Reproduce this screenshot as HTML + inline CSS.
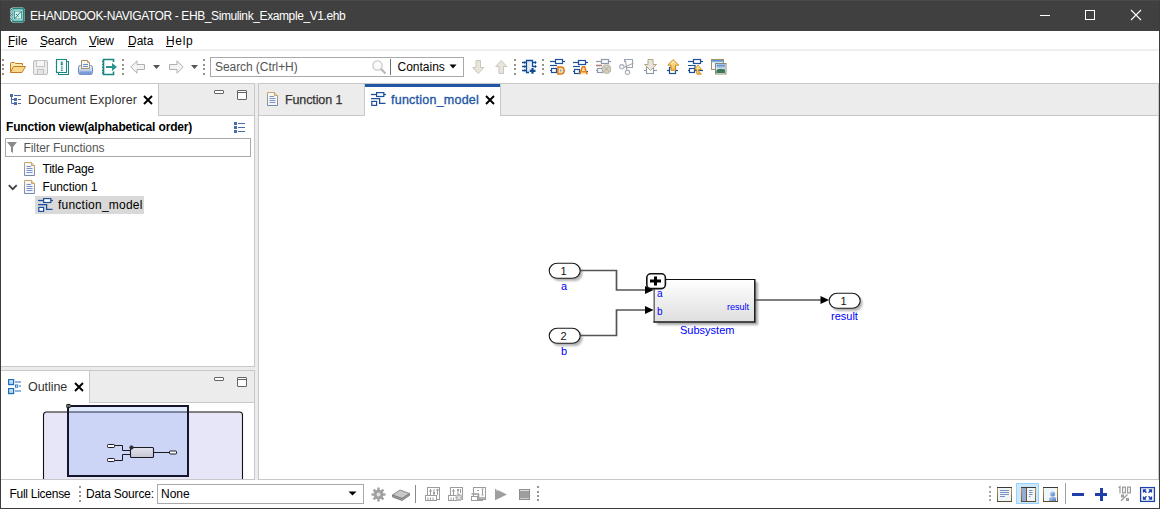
<!DOCTYPE html>
<html><head><meta charset="utf-8">
<style>
*{box-sizing:border-box}
html,body{margin:0;padding:0;width:1160px;height:509px;overflow:hidden;background:#fff;position:relative;font-family:"Liberation Sans",sans-serif}
.a{position:absolute}
.t{position:absolute;white-space:pre;line-height:1;font-family:"Liberation Sans",sans-serif}
svg{position:absolute;overflow:visible}
</style></head><body>
<!-- window frame -->
<div class="a" style="left:0;top:0;width:1160px;height:31px;background:#404040"></div>
<div class="a" style="left:0;top:0;width:1160px;height:1px;background:#4a4a4a"></div>
<div class="a" style="left:0;top:0;width:1px;height:509px;background:#3c3c3c"></div>
<div class="a" style="left:1159px;top:0;width:1px;height:509px;background:#3c3c3c"></div>
<div class="a" style="left:0;top:508px;width:1160px;height:1px;background:#3c3c3c"></div>

<!-- title -->
<div class="t" id="title" style="left:30px;top:9.84px;font-size:12px;color:#fff;letter-spacing:-0.396px">EHANDBOOK-NAVIGATOR - EHB_Simulink_Example_V1.ehb</div>
<div class="a" style="left:1040px;top:15px;width:10px;height:1px;background:#fff"></div>
<div class="a" style="left:1085px;top:10px;width:10px;height:10px;border:1px solid #fff"></div>
<svg style="left:1131px;top:10px" width="11" height="11"><path d="M0 0L10 10M10 0L0 10" stroke="#fff" stroke-width="1.1"/></svg>

<!-- menu -->
<div class="a" style="left:1px;top:49px;width:1158px;height:2px;background:#efefef"></div>


<!-- menu texts -->
<div class="t" style="left:8px;top:34.84px;font-size:12px;color:#000;letter-spacing:0px">File</div>
<div class="a" style="left:8px;top:46px;width:6px;height:1px;background:#000"></div>
<div class="t" style="left:40px;top:34.84px;font-size:12px;color:#000;letter-spacing:-0.2px">Search</div>
<div class="a" style="left:40px;top:46px;width:6px;height:1px;background:#000"></div>
<div class="t" style="left:89px;top:34.84px;font-size:12px;color:#000;letter-spacing:-0.333px">View</div>
<div class="a" style="left:89px;top:46px;width:7px;height:1px;background:#000"></div>
<div class="t" style="left:128px;top:34.84px;font-size:12px;color:#000;letter-spacing:0px">Data</div>
<div class="a" style="left:128px;top:46px;width:7px;height:1px;background:#000"></div>
<div class="t" style="left:166px;top:34.84px;font-size:12px;color:#000;letter-spacing:0.667px">Help</div>
<div class="a" style="left:166px;top:46px;width:7px;height:1px;background:#000"></div>


<!-- toolbar -->
<div class="a" style="left:2px;top:59px;width:2px;height:2px;background:#9a9488"></div><div class="a" style="left:2px;top:64px;width:2px;height:2px;background:#9a9488"></div><div class="a" style="left:2px;top:68px;width:2px;height:2px;background:#9a9488"></div><div class="a" style="left:2px;top:73px;width:2px;height:2px;background:#9a9488"></div>
<svg style="left:10px;top:60px" width="16" height="16" viewBox="0 0 16 16">
<path d="M0.5 12.5V3.5Q0.5 2.5 1.5 2.5H4.5L5.5 3.5H12.5V5.5" fill="#fbe7b0" stroke="#c47d22"/>
<path d="M0.5 12.5L3.5 6.5H15.5L12 12.5Z" fill="#fad788" stroke="#c47d22"/>
</svg>
<svg style="left:33px;top:60px" width="16" height="16" viewBox="0 0 16 16">
<rect x="0.5" y="0.5" width="14" height="14" rx="1.5" fill="#ececec" stroke="#bcbcbc"/>
<rect x="3.5" y="0.5" width="8" height="6" fill="#f6f6f6" stroke="#c4c4c4"/>
<rect x="4.5" y="9.5" width="6" height="5" fill="#e4e4e4" stroke="#c0c0c0"/>
</svg>
<svg style="left:55px;top:59px" width="16" height="17" viewBox="0 0 16 17">
<rect x="3.5" y="2.5" width="10" height="13" fill="#fff" stroke="#1b8780" stroke-width="1"/>
<rect x="1.5" y="0.5" width="10" height="13" fill="#fff" stroke="#1b8780" stroke-width="1.1"/>
<path d="M0.5 2h2l-1 1.3ZM0.5 4.5h2l-1 1.3ZM0.5 7h2l-1 1.3ZM0.5 9.5h2l-1 1.3ZM0.5 12h2l-1 1.3Z" fill="#1b8780"/>
<rect x="5" y="2" width="4.5" height="10" fill="#f0f6f5"/>
<circle cx="6.8" cy="3.3" r="0.9" fill="#1b8780"/><rect x="5.8" y="4.2" width="2" height="2" fill="#1b8780"/>
<path d="M6 8h1.6M6 9.8h1.6M6 11.5h1.6" stroke="#1b8780"/>
</svg>
<svg style="left:78px;top:60px" width="16" height="16" viewBox="0 0 16 16">
<defs><linearGradient id="prg" x1="0" y1="0" x2="0" y2="1"><stop offset="0" stop-color="#f8faff"/><stop offset="1" stop-color="#8aa8dc"/></linearGradient></defs>
<rect x="0.5" y="5.5" width="14" height="9" rx="2" fill="url(#prg)" stroke="#6a8cc8"/>
<rect x="1.5" y="11.5" width="12" height="3" rx="1" fill="#7c9ad4"/>
<path d="M3.5 0.5H9.5L11.5 2.5V8.5H3.5Z" fill="#f4f6fb" stroke="#a8905a"/>
<path d="M9.5 0.5V2.5H11.5" fill="#e8cf90" stroke="#c8a050"/>
<path d="M5 4.5h5M5 6.5h5" stroke="#6a8cc8"/>
</svg>
<svg style="left:101px;top:59px" width="17" height="16" viewBox="0 0 17 16">
<path d="M12.5 3V0.5H2.5V15.5H12.5V12.5" fill="none" stroke="#1b8780" stroke-width="1.6"/>
<path d="M1 2.5h2M1 5.5h2M1 8.5h2M1 11.5h2M1 14h2" stroke="#1b8780" stroke-width="1.3"/>
<path d="M5 7h6V4l5 4-5 4V9H5Z" fill="#2a9590"/>
</svg>
<div class="a" style="left:122px;top:59px;width:2px;height:2px;background:#9a9488"></div><div class="a" style="left:122px;top:64px;width:2px;height:2px;background:#9a9488"></div><div class="a" style="left:122px;top:68px;width:2px;height:2px;background:#9a9488"></div><div class="a" style="left:122px;top:73px;width:2px;height:2px;background:#9a9488"></div>
<svg style="left:130px;top:60px" width="16" height="14" viewBox="0 0 16 14">
<path d="M0.8 7L7 0.8V4.5H14.5V9.5H7V13.2Z" fill="#f3f3f3" stroke="#b0b0b0" stroke-linejoin="round"/>
</svg>
<svg style="left:152px;top:64px" width="9" height="6" viewBox="0 0 9 6"><path d="M1 1H8L4.5 5Z" fill="#555"/></svg>
<svg style="left:169px;top:60px" width="16" height="14" viewBox="0 0 16 14">
<path d="M14.2 7L8 0.8V4.5H0.5V9.5H8V13.2Z" fill="#f3f3f3" stroke="#b0b0b0" stroke-linejoin="round"/>
</svg>
<svg style="left:190px;top:64px" width="9" height="6" viewBox="0 0 9 6"><path d="M1 1H8L4.5 5Z" fill="#555"/></svg>
<div class="a" style="left:203px;top:59px;width:2px;height:2px;background:#9a9488"></div><div class="a" style="left:203px;top:64px;width:2px;height:2px;background:#9a9488"></div><div class="a" style="left:203px;top:68px;width:2px;height:2px;background:#9a9488"></div><div class="a" style="left:203px;top:73px;width:2px;height:2px;background:#9a9488"></div>
<div class="a" style="left:210px;top:57px;width:254px;height:20px;border:1px solid #a9a9a9;background:#fff"></div>
<div class="t" id="srch" style="left:215px;top:60.84px;font-size:12px;color:#545454;letter-spacing:-0.071px">Search (Ctrl+H)</div>
<svg style="left:372px;top:60px" width="15" height="15" viewBox="0 0 15 15">
<circle cx="5.5" cy="5.5" r="4.6" fill="#fafafa" stroke="#c8c8c8" stroke-width="1.3"/>
<path d="M9 9L13.5 13.5" stroke="#b4b4b4" stroke-width="2"/>
</svg>
<div class="a" style="left:390px;top:59px;width:1px;height:16px;background:#707070"></div>
<div class="t" style="left:397.5px;top:60.84px;font-size:12px;color:#000;letter-spacing:0px">Contains</div>
<svg style="left:449px;top:64px" width="8" height="5" viewBox="0 0 8 5"><path d="M0.5 0.5H7.5L4 4.5Z" fill="#000"/></svg>
<svg style="left:472px;top:60px" width="13" height="15" viewBox="0 0 13 15">
<path d="M4 0.5H8.5V7.5H11.8L6.25 13.5L0.7 7.5H4Z" fill="#e8e6dc" stroke="#c9c7bd" stroke-linejoin="round"/>
</svg>
<svg style="left:495px;top:60px" width="13" height="15" viewBox="0 0 13 15">
<path d="M4 13.5H8.5V6.5H11.8L6.25 0.5L0.7 6.5H4Z" fill="#e8e6dc" stroke="#c9c7bd" stroke-linejoin="round"/>
</svg>
<div class="a" style="left:514px;top:59px;width:2px;height:2px;background:#9a9488"></div><div class="a" style="left:514px;top:64px;width:2px;height:2px;background:#9a9488"></div><div class="a" style="left:514px;top:68px;width:2px;height:2px;background:#9a9488"></div><div class="a" style="left:514px;top:73px;width:2px;height:2px;background:#9a9488"></div>
<svg style="left:522px;top:59px" width="16" height="16" viewBox="0 0 16 16">
<defs><linearGradient id="fng" x1="0" y1="0" x2="1" y2="0"><stop offset="0" stop-color="#fff"/><stop offset="0.4" stop-color="#dce8f4"/><stop offset="1" stop-color="#fff"/></linearGradient></defs>
<rect x="4.5" y="1.5" width="6" height="12" fill="url(#fng)"/>
<path d="M7 13.5H4.5V1.5H10.5V8" stroke="#0f4a96" stroke-width="1.3" fill="none"/>
<path d="M0 3.5H3M0 7.5H3M0 11.5H3M10.5 3.5H13.5M10.5 7.5H13.5" stroke="#0f4a96" stroke-width="1.3"/>
<path d="M2.5 1.8L4.3 3.5L2.5 5.2ZM2.5 5.8L4.3 7.5L2.5 9.2ZM2.5 9.8L4.3 11.5L2.5 13.2ZM13 1.8L14.8 3.5L13 5.2ZM13 5.8L14.8 7.5L13 9.2Z" fill="#0f4a96"/>
<path d="M10.5 9V14.8M7.7 11.8H13.5" stroke="#0f4a96" stroke-width="2.2"/>
</svg>
<div class="a" style="left:542px;top:59px;width:2px;height:2px;background:#9a9488"></div><div class="a" style="left:542px;top:64px;width:2px;height:2px;background:#9a9488"></div><div class="a" style="left:542px;top:68px;width:2px;height:2px;background:#9a9488"></div><div class="a" style="left:542px;top:73px;width:2px;height:2px;background:#9a9488"></div>
<svg style="left:550px;top:59px" width="16" height="16" viewBox="0 0 16 16">
<path d="M0 2.5H15" stroke="#1d4f9a" stroke-width="1.2"/><rect x="5.5" y="0.5" width="7" height="4" fill="#fff" stroke="#1d4f9a" stroke-width="1.2"/>
<path d="M0 6.5H7" stroke="#1d4f9a" stroke-width="1.2"/>
<path d="M0 11.5H2M12 11.5H15" stroke="#1d4f9a" stroke-width="1.2"/><rect x="1.5" y="9.5" width="5" height="4" fill="#fff" stroke="#1d4f9a" stroke-width="1.2"/>
</svg>
<svg style="left:557px;top:66px" width="8" height="9" viewBox="0 0 8 9"><path d="M0.9 0.9H3.6Q7.1 0.9 7.1 4.5Q7.1 8.1 3.6 8.1H0.9Z" fill="#fce0a0" stroke="#e07818" stroke-width="1.5"/><path d="M3 3L5 4.5L3 6Z" fill="#7aa8e0"/></svg>
<svg style="left:573px;top:60px" width="16" height="16" viewBox="0 0 16 16">
<path d="M0 2.5H15" stroke="#1d4f9a" stroke-width="1.2"/><rect x="5.5" y="0.5" width="7" height="4" fill="#fff" stroke="#1d4f9a" stroke-width="1.2"/>
<path d="M0 6.5H7" stroke="#1d4f9a" stroke-width="1.2"/>
<path d="M0 11.5H2M12 11.5H15" stroke="#1d4f9a" stroke-width="1.2"/><rect x="1.5" y="9.5" width="5" height="4" fill="#fff" stroke="#1d4f9a" stroke-width="1.2"/>
</svg>
<svg style="left:579px;top:66px" width="9" height="9" viewBox="0 0 9 9"><path d="M0.8 8.2L3.4 0.8H5.6L8.2 8.2" fill="#fce0a0" stroke="#e07818" stroke-width="1.5" stroke-linejoin="round"/><path d="M2.5 5.8H6.5" stroke="#e07818" stroke-width="1.3"/></svg>
<svg style="left:596px;top:59px" width="16" height="16" viewBox="0 0 16 16">
<path d="M0 2.5H15" stroke="#8e9aac" stroke-width="1.2"/><rect x="5.5" y="0.5" width="7" height="4" fill="#fafafa" stroke="#8e9aac" stroke-width="1.2"/>
<path d="M0 6.5H6" stroke="#b08080" stroke-width="1.6"/>
<path d="M0 11.5H2" stroke="#8e9aac" stroke-width="1.2"/><rect x="1.5" y="9.5" width="5" height="4" fill="#fafafa" stroke="#8e9aac" stroke-width="1.2"/>
<path d="M8.3 6H12.7L14.6 7.9V12.3L12.7 14.2H8.3L6.4 12.3V7.9Z" fill="#d6d2c0" stroke="#b4b0a0" stroke-width="0.9"/>
<path d="M7.6 7.2L13.4 13M13.4 7.2L7.6 13" stroke="#a8a494" stroke-width="0.9"/>
</svg>
<svg style="left:619px;top:59px" width="16" height="16" viewBox="0 0 16 16">
<path d="M5.5 3V0.5H13.5V8.5H7" fill="none" stroke="#98a4b4" stroke-width="1.1"/>
<path d="M14.5 4L5 8.5M6.5 1.5L8 13" stroke="#a0a0a0" stroke-width="1"/>
<circle cx="2.8" cy="7.8" r="2.2" fill="#fafafa" stroke="#a8b0bc" stroke-width="1.1"/><circle cx="8.5" cy="13.3" r="2.2" fill="#fafafa" stroke="#a8b0bc" stroke-width="1.1"/>
</svg>
<svg style="left:644px;top:59px" width="14" height="16" viewBox="0 0 14 16">
<path d="M0 11.5H13" stroke="#8e9aac" stroke-width="1.1"/><rect x="2.5" y="8.5" width="7" height="6" fill="#fff" stroke="#8e9aac" stroke-width="1.1"/>
<path d="M4 0.5H9V5.5H12.5L6.5 11.5L0.5 5.5H4Z" fill="#e8e6da" stroke="#b4a888" stroke-linejoin="round"/>
</svg>
<svg style="left:667px;top:59px" width="14" height="16" viewBox="0 0 14 16">
<defs><linearGradient id="yg" x1="0" y1="0" x2="0" y2="1"><stop offset="0" stop-color="#fff4c0"/><stop offset="1" stop-color="#f0b840"/></linearGradient></defs>
<path d="M0 11.5H11" stroke="#1d4f9a" stroke-width="1.2"/><rect x="2.5" y="8.5" width="6" height="6" fill="#fff" stroke="#1d4f9a" stroke-width="1.2"/>
<path d="M4 11.3V6.2H0.8L6 0.6L11.8 6.2H8.5V11.3Z" fill="url(#yg)" stroke="#d08a1a" stroke-linejoin="round" stroke-width="1"/>
</svg>
<svg style="left:688px;top:59px" width="16" height="16" viewBox="0 0 16 16">
<path d="M0 2.5H15" stroke="#1d4f9a" stroke-width="1.2"/><rect x="5.5" y="0.5" width="7" height="4" fill="#fff" stroke="#1d4f9a" stroke-width="1.2"/>
<path d="M0 6.5H7V11" stroke="#1d4f9a" stroke-width="1.2" fill="none"/>
<path d="M0 11.5H15" stroke="#1d4f9a" stroke-width="1.2"/><rect x="1.5" y="9.5" width="5" height="4" fill="#fff" stroke="#1d4f9a" stroke-width="1.2"/>
</svg>
<svg style="left:694px;top:64px" width="10" height="11" viewBox="0 0 10 11">
<path d="M3 10.2Q4.5 10.5 7.5 10Q4 8.5 4.5 5.5H7.5L4 1L0.6 5.5H2.8Q2.2 8.8 3 10.2Z" fill="url(#yg)" stroke="#d08a1a" stroke-width="0.9" stroke-linejoin="round"/>
</svg>
<svg style="left:711px;top:59px" width="16" height="16" viewBox="0 0 16 16">
<defs><linearGradient id="wtb" x1="0" y1="0" x2="0" y2="1"><stop offset="0" stop-color="#4a88d0"/><stop offset="1" stop-color="#a8ccf0"/></linearGradient>
<linearGradient id="wim" x1="0" y1="0" x2="0" y2="1"><stop offset="0" stop-color="#4a80c8"/><stop offset="0.5" stop-color="#d8eaf8"/><stop offset="1" stop-color="#3a7a5a"/></linearGradient></defs>
<rect x="0.5" y="0.5" width="12" height="10" fill="#f4f8fe" stroke="#a89060"/><rect x="1" y="1" width="11" height="2.5" fill="url(#wtb)"/>
<rect x="4.5" y="4.5" width="10.5" height="10.5" fill="#fff" stroke="#8a8a78"/>
<rect x="5.5" y="5.5" width="8.5" height="8.5" fill="url(#wim)"/><path d="M5.5 11Q9 9 14 10.5V14H5.5Z" fill="#3a7a5a"/>
</svg>

<!-- panel borders -->
<!-- Document explorer -->
<div class="a" style="left:1px;top:83px;width:254px;height:284px;border-top:1px solid #c8c8c8;border-right:1px solid #c8c8c8;border-bottom:1px solid #c8c8c8"></div>
<div class="a" style="left:158px;top:84px;width:96px;height:32px;background:#ececec;border-left:1px solid #c8c8c8;border-bottom:1px solid #c8c8c8"></div>
<!-- sash -->
<div class="a" style="left:255px;top:83px;width:3px;height:397px;background:#ececec"></div>
<div class="a" style="left:1px;top:367px;width:254px;height:3px;background:#ececec"></div>
<!-- Outline -->
<div class="a" style="left:1px;top:370px;width:254px;height:110px;border-top:1px solid #c8c8c8;border-right:1px solid #c8c8c8"></div>
<div class="a" style="left:89px;top:371px;width:165px;height:32px;background:#ececec;border-left:1px solid #c8c8c8;border-bottom:1px solid #c8c8c8"></div>
<!-- editor -->
<div class="a" style="left:258px;top:83px;width:901px;height:397px;border:1px solid #c8c8c8;border-right:1px solid #c8c8c8"></div>
<div class="a" style="left:259px;top:84px;width:106px;height:32px;background:#ececec;border-right:1px solid #c8c8c8;border-bottom:1px solid #c8c8c8"></div>
<div class="a" style="left:365px;top:84px;width:136px;height:3px;background:#1f57a4"></div>
<div class="a" style="left:500px;top:84px;width:658px;height:32px;background:#ececec;border-left:1px solid #c8c8c8;border-bottom:1px solid #c8c8c8"></div>


<!-- document explorer tab -->
<svg style="left:10px;top:94px" width="12" height="12" viewBox="0 0 12 12">
<rect x="0" y="0" width="3" height="3" fill="#4a6aa8"/><path d="M1.5 3V9.5H4M1.5 5.5H4" stroke="#4a6aa8" fill="none"/>
<rect x="4" y="4" width="3" height="3" fill="#4a6aa8"/><rect x="4" y="8" width="3" height="3" fill="#4a6aa8"/>
<path d="M4 1.5H11M8 5.5H11M8 9.5H11" stroke="#4a6aa8"/>
</svg>
<div class="t" style="left:28px;top:93.5px;font-size:12.5px;color:#333;letter-spacing:0.125px">Document Explorer</div>
<svg style="left:143px;top:95px" width="10" height="10" viewBox="0 0 10 10"><path d="M1 1L9 9M9 1L1 9" stroke="#000" stroke-width="1.9"/></svg><div class="a" style="left:214px;top:90px;width:10px;height:4px;border:1px solid #646464;border-radius:1px;background:#fff"></div>
<div class="a" style="left:237px;top:90px;width:10px;height:10px;border:1px solid #646464;border-radius:1px;background:#fff"></div>
<div class="a" style="left:238px;top:92px;width:8px;height:1px;background:#646464"></div>
<div class="t" style="left:6px;top:120.84px;font-size:12px;font-weight:bold;color:#000;letter-spacing:-0.156px">Function view(alphabetical order)</div>
<svg style="left:234px;top:122px" width="12" height="11" viewBox="0 0 12 11">
<rect x="0" y="0" width="3" height="3" fill="#4a6aa8"/><rect x="0" y="4" width="3" height="3" fill="#4a6aa8"/><rect x="0" y="8" width="3" height="3" fill="#4a6aa8"/>
<path d="M4 1.5H11M4 5.5H11M4 9.5H11" stroke="#4a6aa8"/>
</svg>
<div class="a" style="left:5px;top:138px;width:246px;height:19px;border:1px solid #a9a9a9;background:#fff"></div>
<svg style="left:7px;top:142px" width="10" height="11" viewBox="0 0 10 11"><path d="M0 0H10L6 5V11L4 9.5V5Z" fill="#8a8a8a"/></svg>
<div class="t" style="left:23.5px;top:141.84px;font-size:12px;color:#555;letter-spacing:-0.067px">Filter Functions</div>
<svg style="left:24px;top:162px" width="12" height="14" viewBox="0 0 12 14">
<defs><linearGradient id="pg24162" x1="0" y1="0" x2="0" y2="1"><stop offset="0" stop-color="#c8a868"/><stop offset="1" stop-color="#7888b0"/></linearGradient></defs>
<path d="M0.5 0.5H7.5L10.5 3.5V13.5H0.5Z" fill="#f4f6fb" stroke="url(#pg24162)"/>
<path d="M7.5 0.5V3.5H10.5" fill="#e8d8a8" stroke="#c8a868"/>
<path d="M2.5 4.5H7M2.5 6.5H8.5M2.5 8.5H8.5M2.5 10.5H8.5" stroke="#7a94c8"/>
</svg>
<div class="t" style="left:42.5px;top:162.84px;font-size:12px;color:#000;letter-spacing:-0.222px">Title Page</div>
<svg style="left:8px;top:184px" width="10" height="8" viewBox="0 0 10 8"><path d="M0.8 1.2L4.75 5.2L8.7 1.2" stroke="#404040" stroke-width="1.8" fill="none"/></svg>
<svg style="left:24px;top:180px" width="12" height="14" viewBox="0 0 12 14">
<defs><linearGradient id="pg24180" x1="0" y1="0" x2="0" y2="1"><stop offset="0" stop-color="#c8a868"/><stop offset="1" stop-color="#7888b0"/></linearGradient></defs>
<path d="M0.5 0.5H7.5L10.5 3.5V13.5H0.5Z" fill="#f4f6fb" stroke="url(#pg24180)"/>
<path d="M7.5 0.5V3.5H10.5" fill="#e8d8a8" stroke="#c8a868"/>
<path d="M2.5 4.5H7M2.5 6.5H8.5M2.5 8.5H8.5M2.5 10.5H8.5" stroke="#7a94c8"/>
</svg>
<div class="t" style="left:42.5px;top:180.84px;font-size:12px;color:#000;letter-spacing:-0.111px">Function 1</div>
<div class="a" style="left:35px;top:196px;width:109px;height:18px;background:#d9d9d9"></div>
<svg style="left:38px;top:198px" width="16" height="14" viewBox="0 0 16 14">
<path d="M0 2.5H15" stroke="#1d4f9a" stroke-width="1.3"/><rect x="5.6" y="0.6" width="7.2" height="3.9" fill="#fff" stroke="#1d4f9a" stroke-width="1.2"/>
<path d="M0 6.6H8.6V11.4H14.5" stroke="#1d4f9a" stroke-width="1.3" fill="none"/>
<rect x="0.8" y="9.4" width="4.8" height="4" fill="#fff" stroke="#1d4f9a" stroke-width="1.2"/>
</svg>
<div class="t" style="left:58px;top:198.84px;font-size:12px;color:#000;letter-spacing:0.231px">function_model</div>

<!-- outline tab -->
<svg style="left:8px;top:379px" width="14" height="15" viewBox="0 0 14 15">
<defs><linearGradient id="olg" x1="0" y1="0" x2="0" y2="1"><stop offset="0" stop-color="#e8f2fc"/><stop offset="1" stop-color="#9ac4ee"/></linearGradient></defs>
<rect x="0.6" y="0.6" width="5" height="5" fill="url(#olg)" stroke="#1e6ec0" stroke-width="1.2"/><rect x="0.6" y="9.6" width="5" height="5" fill="url(#olg)" stroke="#1e6ec0" stroke-width="1.2"/>
<path d="M7 3H13M7 12H13M11 7H13" stroke="#1e6ec0" stroke-width="1.1"/>
<rect x="7.5" y="6" width="2.2" height="2.2" fill="#fff" stroke="#1e6ec0" stroke-width="0.9"/>
</svg>
<div class="t" style="left:28px;top:380.5px;font-size:12.5px;color:#333;letter-spacing:-0.05px">Outline</div>
<svg style="left:74px;top:382px" width="10" height="10" viewBox="0 0 10 10"><path d="M1 1L9 9M9 1L1 9" stroke="#000" stroke-width="1.9"/></svg><div class="a" style="left:214px;top:377px;width:10px;height:4px;border:1px solid #646464;border-radius:1px;background:#fff"></div>
<div class="a" style="left:237px;top:377px;width:10px;height:10px;border:1px solid #646464;border-radius:1px;background:#fff"></div>
<div class="a" style="left:238px;top:379px;width:8px;height:1px;background:#646464"></div>


<!-- editor tabs -->
<svg style="left:267px;top:92px" width="12" height="14" viewBox="0 0 12 14">
<defs><linearGradient id="pg26792" x1="0" y1="0" x2="0" y2="1"><stop offset="0" stop-color="#c8a868"/><stop offset="1" stop-color="#7888b0"/></linearGradient></defs>
<path d="M0.5 0.5H7.5L10.5 3.5V13.5H0.5Z" fill="#f4f6fb" stroke="url(#pg26792)"/>
<path d="M7.5 0.5V3.5H10.5" fill="#e8d8a8" stroke="#c8a868"/>
<path d="M2.5 4.5H7M2.5 6.5H8.5M2.5 8.5H8.5M2.5 10.5H8.5" stroke="#7a94c8"/>
</svg>
<div class="t" style="left:285px;top:93.5px;font-size:12.5px;color:#333;-webkit-text-stroke:0.25px #333;letter-spacing:-0.111px">Function 1</div>
<svg style="left:371px;top:92px" width="16" height="14" viewBox="0 0 16 14">
<path d="M0 2.5H15" stroke="#1d4f9a" stroke-width="1.3"/><rect x="5.6" y="0.6" width="7.2" height="3.9" fill="#fff" stroke="#1d4f9a" stroke-width="1.2"/>
<path d="M0 6.6H8.6V11.4H14.5" stroke="#1d4f9a" stroke-width="1.3" fill="none"/>
<rect x="0.8" y="9.4" width="4.8" height="4" fill="#fff" stroke="#1d4f9a" stroke-width="1.2"/>
</svg>
<div class="t" style="left:391px;top:93.5px;font-size:12.5px;color:#1f57a4;-webkit-text-stroke:0.35px #1f57a4;letter-spacing:0.231px">function_model</div>
<svg style="left:485px;top:95px" width="10" height="10" viewBox="0 0 10 10"><path d="M1 1L9 9M9 1L1 9" stroke="#000" stroke-width="1.9"/></svg>

<!-- diagram -->
<svg style="left:0;top:0" width="1160" height="509">
<defs>
<linearGradient id="blk" x1="0" y1="0" x2="0" y2="1"><stop offset="0" stop-color="#ffffff"/><stop offset="1" stop-color="#dedede"/></linearGradient>
<filter id="sh" x="-20%" y="-30%" width="150%" height="170%"><feGaussianBlur stdDeviation="1.3"/></filter>
</defs>
<!-- shadows -->
<rect x="551.5" y="266" width="31" height="15" rx="7.5" fill="#666" opacity="0.5" filter="url(#sh)"/>
<rect x="551.5" y="331" width="31" height="15" rx="7.5" fill="#666" opacity="0.5" filter="url(#sh)"/>
<rect x="831.5" y="296" width="31" height="15" rx="7.5" fill="#666" opacity="0.5" filter="url(#sh)"/>
<rect x="657" y="282" width="101" height="43" fill="#666" opacity="0.55" filter="url(#sh)"/>
<!-- lines -->
<path d="M580 270.5H616.5V290H645" fill="none" stroke="#555" stroke-width="1.7"/>
<path d="M580 335.5H616.5V310H645" fill="none" stroke="#555" stroke-width="1.7"/>
<path d="M754 300H821" fill="none" stroke="#555" stroke-width="1.7"/>
<path d="M645 286L653.5 290L645 294Z" fill="#000"/>
<path d="M645 306L653.5 310L645 314Z" fill="#000"/>
<path d="M820.5 296L829 300L820.5 304Z" fill="#000"/>
<!-- ports -->
<rect x="549.2" y="263.3" width="31" height="15" rx="8" ry="7.5" fill="#fff" stroke="#1a1a1a" stroke-width="1.1"/>
<rect x="549.2" y="328.3" width="31" height="15" rx="8" ry="7.5" fill="#fff" stroke="#1a1a1a" stroke-width="1.1"/>
<rect x="829.2" y="293.3" width="31" height="15" rx="8" ry="7.5" fill="#fff" stroke="#1a1a1a" stroke-width="1.1"/>
<!-- block -->
<rect x="654" y="279.5" width="101" height="43" fill="url(#blk)"/>
<path d="M654 279.5H755" stroke="#111" stroke-width="1.2"/>
<path d="M654.2 279.5V322.5" stroke="#6a6a6a" stroke-width="1.5"/>
<path d="M754.8 279V322H653.5" stroke="#1a1a1a" stroke-width="1.5" fill="none"/>
<rect x="646.8" y="273.8" width="18.6" height="14.8" rx="4" fill="#fff" stroke="#111" stroke-width="1.6"/>
<path d="M655.5 276.5V285.5M650 281H661" stroke="#000" stroke-width="3"/>
</svg>
<div class="t" style="left:560.5px;top:266.2px;font-size:11px;color:#111">1</div>
<div class="t" style="left:560.5px;top:331.2px;font-size:11px;color:#111">2</div>
<div class="t" style="left:840.5px;top:296.2px;font-size:11px;color:#111">1</div>
<div class="t" style="left:561px;top:281px;font-size:11px;color:#00f">a</div>
<div class="t" style="left:561px;top:346px;font-size:11px;color:#00f">b</div>
<div class="t" style="left:831px;top:311px;font-size:11px;color:#00f">result</div>
<div class="t" style="left:680px;top:325px;font-size:11px;color:#00f">Subsystem</div>
<div class="t" style="left:657px;top:288.5px;font-size:10px;color:#00f">a</div>
<div class="t" style="left:657px;top:306.5px;font-size:10px;color:#00f">b</div>
<div class="t" style="left:727px;top:303px;font-size:9px;color:#00f">result</div>

<!-- outline canvas -->
<div class="a" style="left:1px;top:479px;width:254px;height:1px;background:#c8c8c8"></div>
<svg style="left:0;top:0" width="1160" height="509">
<clipPath id="ocl"><rect x="1" y="403" width="253" height="76"/></clipPath>
<g clip-path="url(#ocl)">
<path d="M43.5 482V415Q43.5 412 46.5 412H239.5Q242.5 412 242.5 415V482" fill="#e6e6f8" stroke="#111" stroke-width="1.1"/>
<rect x="68" y="406" width="120" height="70" fill="rgb(105,145,243)" fill-opacity="0.2"/>
<rect x="68" y="406" width="120" height="70" fill="none" stroke="#14142a" stroke-width="2"/>
<ellipse cx="68.5" cy="406" rx="2.6" ry="2.2" fill="#222"/>
<path d="M66.5 406H70.5" stroke="#ddd" stroke-width="0.8"/>
<defs><linearGradient id="mblk" x1="0" y1="0" x2="0" y2="1"><stop offset="0" stop-color="#e4e4f0"/><stop offset="1" stop-color="#c4c4d4"/></linearGradient></defs>
<path d="M115 445.5H122.5V450.5H130M115 460.5H122.5V454.5H130M153 452.5H169" stroke="#1a1a22" stroke-width="1" fill="none"/>
<rect x="107.5" y="444.5" width="7" height="3" rx="0.8" fill="#fff" stroke="#1a1a22" stroke-width="1"/>
<rect x="107.5" y="458.5" width="7" height="3" rx="0.8" fill="#fff" stroke="#1a1a22" stroke-width="1"/>
<rect x="169.5" y="451" width="7" height="3" rx="0.8" fill="#fff" stroke="#1a1a22" stroke-width="1"/>
<rect x="130.5" y="447.5" width="23" height="10" rx="1" fill="url(#mblk)" stroke="#1a1a22" stroke-width="1.1"/>
<circle cx="131.5" cy="447.5" r="1.8" fill="#333" stroke="#1a1a22" stroke-width="0.6"/>
</g>
</svg>

<!-- app icon -->
<svg style="left:9px;top:7px" width="16" height="16" viewBox="0 0 16 16">
<rect x="2" y="0.5" width="13.5" height="15" rx="2" fill="#f4fbfa"/>
<rect x="3.5" y="1.7" width="11" height="12.6" rx="1" fill="none" stroke="#1b8780" stroke-width="1.8"/>
<path d="M1 2.5h3M1 5h3M1 7.5h3M1 10h3M1 12.5h3" stroke="#f4fbfa" stroke-width="1.6"/>
<path d="M1.5 2.5h2M1.5 5h2M1.5 7.5h2M1.5 10h2M1.5 12.5h2" stroke="#1b8780" stroke-width="1"/>
<rect x="5.5" y="4" width="7" height="8" fill="#d9eeeb" stroke="#1b8780" stroke-width="0.8"/>
<path d="M6 11.5L12 4.5M7 7l2.5 2.5" stroke="#1b8780" stroke-width="1"/>
</svg>

<!-- status bar -->
<div class="t" style="left:9.5px;top:487.84px;font-size:12px;color:#000;letter-spacing:-0.273px">Full License</div>
<div class="a" style="left:79px;top:486px;width:2px;height:2px;background:#9a9488"></div>
<div class="a" style="left:79px;top:491px;width:2px;height:2px;background:#9a9488"></div>
<div class="a" style="left:79px;top:495px;width:2px;height:2px;background:#9a9488"></div>
<div class="a" style="left:79px;top:500px;width:2px;height:2px;background:#9a9488"></div>
<div class="t" style="left:86px;top:487.84px;font-size:12px;color:#000;letter-spacing:-0.182px">Data Source:</div>
<div class="a" style="left:157px;top:484px;width:207px;height:20px;border:1px solid #a9a9a9;background:#fff"></div>
<div class="t" style="left:161px;top:487.84px;font-size:12px;color:#000">None</div>
<svg style="left:348px;top:491px" width="9" height="5" viewBox="0 0 9 5"><path d="M0.5 0.5H8.5L4.5 4.5Z" fill="#000"/></svg>
<svg style="left:371px;top:487px" width="15" height="15" viewBox="0 0 15 15">
<g fill="#a0a0a0"><circle cx="7.5" cy="7.5" r="4.8"/>
<rect x="6.3" y="0.5" width="2.4" height="14"/><rect x="0.5" y="6.3" width="14" height="2.4"/>
<rect x="6.3" y="0.5" width="2.4" height="14" transform="rotate(45 7.5 7.5)"/><rect x="6.3" y="0.5" width="2.4" height="14" transform="rotate(-45 7.5 7.5)"/></g>
<circle cx="7.5" cy="7.5" r="2" fill="#e0e0e0"/>
</svg>
<svg style="left:392px;top:487px" width="18" height="14" viewBox="0 0 18 14">
<path d="M0.5 8L8 3L17.5 6.5L10 11.5Z" fill="#c8c8c8" stroke="#8a8a8a"/>
<path d="M0.5 8V10L10 13.5L17.5 8.5V6.5L10 11.5Z" fill="#9a9a9a" stroke="#7a7a7a" stroke-width="0.8"/>
</svg>
<div class="a" style="left:415px;top:485px;width:1px;height:18px;background:#8a8a8a"></div>
<svg style="left:425px;top:486px" width="16" height="16" viewBox="0 0 16 16">
<g fill="#fff" stroke="#9c9c9c" stroke-width="1">
<rect x="2.5" y="1.5" width="12" height="12"/>
</g>
<path d="M5.5 3V9M9 3V9M12.5 3V9" stroke="#9c9c9c"/>
<rect x="4.5" y="4" width="2" height="2" fill="#9c9c9c"/><rect x="8" y="6" width="2" height="2" fill="#9c9c9c"/><rect x="11.5" y="3" width="2" height="2" fill="#9c9c9c"/>
<rect x="0.5" y="9.5" width="11" height="5" fill="#fff" stroke="#9c9c9c"/>
<path d="M3 11.5V14.5M5.5 11.5V14.5M8 11.5V14.5" stroke="#9c9c9c"/>
</svg>
<svg style="left:448px;top:486px" width="16" height="16" viewBox="0 0 16 16">
<rect x="2.5" y="1.5" width="12" height="12" fill="#fff" stroke="#9c9c9c"/>
<path d="M5.5 3V9M10 3V9M12.5 3V7" stroke="#9c9c9c"/>
<rect x="4.5" y="4" width="2" height="2" fill="#9c9c9c"/><rect x="9" y="3" width="2" height="2" fill="#9c9c9c"/>
<rect x="0.5" y="9.5" width="8" height="5" fill="#fff" stroke="#9c9c9c"/>
<path d="M3 11.5V14.5M5.5 11.5V14.5" stroke="#9c9c9c"/>
<circle cx="11" cy="11.5" r="3.6" fill="#b4b4b4"/><path d="M9.2 9.7L12.8 13.3M12.8 9.7L9.2 13.3" stroke="#fff" stroke-width="1"/>
</svg>
<svg style="left:471px;top:486px" width="16" height="16" viewBox="0 0 16 16">
<rect x="2.5" y="1.5" width="12" height="12" fill="#fff" stroke="#9c9c9c"/>
<path d="M6 4.5H8M11.5 3V9M10.5 3H12.5M10.5 9H12.5" stroke="#9c9c9c"/>
<path d="M0.5 8H7.5V12H14.5" stroke="#9c9c9c" stroke-width="1.5" fill="none"/>
<rect x="0.5" y="10.5" width="6" height="4" fill="#fff" stroke="#9c9c9c"/>
<path d="M7 14.5H12" stroke="#9c9c9c"/>
</svg>
<svg style="left:494px;top:488px" width="14" height="13" viewBox="0 0 14 13"><path d="M1 0.8L13 6.5L1 12.2Z" fill="#9e9e9e"/><path d="M2 1.8L4 2.8" stroke="#ddd"/></svg>
<div class="a" style="left:519px;top:489px;width:11px;height:11px;background:#9e9e9e;border:1px solid #8e8e8e"></div>
<div class="a" style="left:520px;top:490px;width:9px;height:1px;background:#e0e0e0"></div>
<div class="a" style="left:520px;top:498px;width:9px;height:1px;background:#cfcfcf"></div>
<div class="a" style="left:537px;top:486px;width:2px;height:2px;background:#9a9488"></div>
<div class="a" style="left:537px;top:491px;width:2px;height:2px;background:#9a9488"></div>
<div class="a" style="left:537px;top:495px;width:2px;height:2px;background:#9a9488"></div>
<div class="a" style="left:537px;top:499px;width:2px;height:2px;background:#9a9488"></div>

<!-- right status -->
<div class="a" style="left:989px;top:486px;width:2px;height:2px;background:#a8a49a"></div>
<div class="a" style="left:989px;top:491px;width:2px;height:2px;background:#a8a49a"></div>
<div class="a" style="left:989px;top:495px;width:2px;height:2px;background:#a8a49a"></div>
<div class="a" style="left:989px;top:499px;width:2px;height:2px;background:#a8a49a"></div>
<svg style="left:997px;top:487px" width="15" height="15" viewBox="0 0 15 15">
<defs><linearGradient id="brd" x1="0" y1="0" x2="0" y2="1"><stop offset="0" stop-color="#c09a50"/><stop offset="1" stop-color="#6a5a3a"/></linearGradient></defs>
<rect x="0.5" y="0.5" width="14" height="14" fill="#eef6fa" stroke="url(#brd)"/>
<path d="M0 0.5H15" stroke="#3a3a3a"/><path d="M0 14.5H15" stroke="#5a4a30"/>
<path d="M3 3.5H12M3 5.5H12M3 7.5H12M3 9.5H8" stroke="#7c90c0"/>
</svg>
<div class="a" style="left:1016px;top:483px;width:23px;height:21px;background:#cce8ff;border:1px solid #99d1ff"></div>
<svg style="left:1021px;top:487px" width="15" height="15" viewBox="0 0 15 15">
<rect x="0.5" y="0.5" width="14" height="14" fill="#eef6fa" stroke="url(#brd)"/>
<rect x="1" y="1" width="4.5" height="13" fill="#96acd6"/><path d="M5.5 1V14" stroke="#6a5a3a"/>
<path d="M0 0.5H15" stroke="#3a3a3a"/><path d="M0 14.5H15" stroke="#5a4a30"/>
<path d="M8 3.5H11.5M8 5.5H11.5M8 7.5H11.5M8 9.5H9.5" stroke="#7c90c0"/>
</svg>
<svg style="left:1043px;top:487px" width="15" height="15" viewBox="0 0 15 15">
<defs><linearGradient id="psn" x1="0" y1="0" x2="1" y2="1"><stop offset="0" stop-color="#c8daf4"/><stop offset="1" stop-color="#4a78c0"/></linearGradient></defs>
<rect x="0.5" y="0.5" width="14" height="14" fill="#eef6fa" stroke="url(#brd)"/>
<path d="M0 0.5H15" stroke="#3a3a3a"/><path d="M0 14.5H15" stroke="#5a4a30"/>
<circle cx="9.5" cy="7" r="2.5" fill="url(#psn)"/><path d="M6 14V12Q6 9.5 9.5 9.5Q13 9.5 13 12V14Z" fill="url(#psn)"/>
</svg>
<div class="a" style="left:1065px;top:483px;width:1px;height:21px;background:#a0a0a0"></div>
<div class="a" style="left:1072px;top:493px;width:12px;height:3px;background:#1f3fa8"></div>
<div class="a" style="left:1095px;top:493px;width:12px;height:3px;background:#1f3fa8"></div>
<div class="a" style="left:1099.5px;top:488px;width:3px;height:13px;background:#1f3fa8"></div>
<svg style="left:1112px;top:483px" width="46" height="23" viewBox="0 0 46 23">
<g fill="none" stroke="#999" stroke-width="1.2">
<path d="M6.5 4.5L8 3.6V10.5"/>
<rect x="10.6" y="4.1" width="2.8" height="5.8"/>
<rect x="15.6" y="4.1" width="2.8" height="5.8"/>
<rect x="9.6" y="12.1" width="1.8" height="1.8"/>
<rect x="14.6" y="15.6" width="1.8" height="1.8"/>
<path d="M9 17.8L15.5 11.5"/>
</g>
<rect x="28.6" y="4.6" width="13.8" height="13.8" fill="#fff" stroke="#1c3fb0" stroke-width="1.3"/>
<rect x="29.7" y="5.7" width="11.6" height="11.6" fill="none" stroke="#c8d4dc" stroke-width="0.7"/>
<g stroke="#1c3fb0" stroke-width="1.3" fill="none">
<path d="M31.5 9.5V6.8H34.2M31.5 6.8L34.5 9.8"/>
<path d="M39.5 9.5V6.8H36.8M39.5 6.8L36.5 9.8"/>
<path d="M31.5 13.5V16.2H34.2M31.5 16.2L34.5 13.2"/>
<path d="M39.5 13.5V16.2H36.8M39.5 16.2L36.5 13.2"/>
</g>
</svg>

</body></html>
